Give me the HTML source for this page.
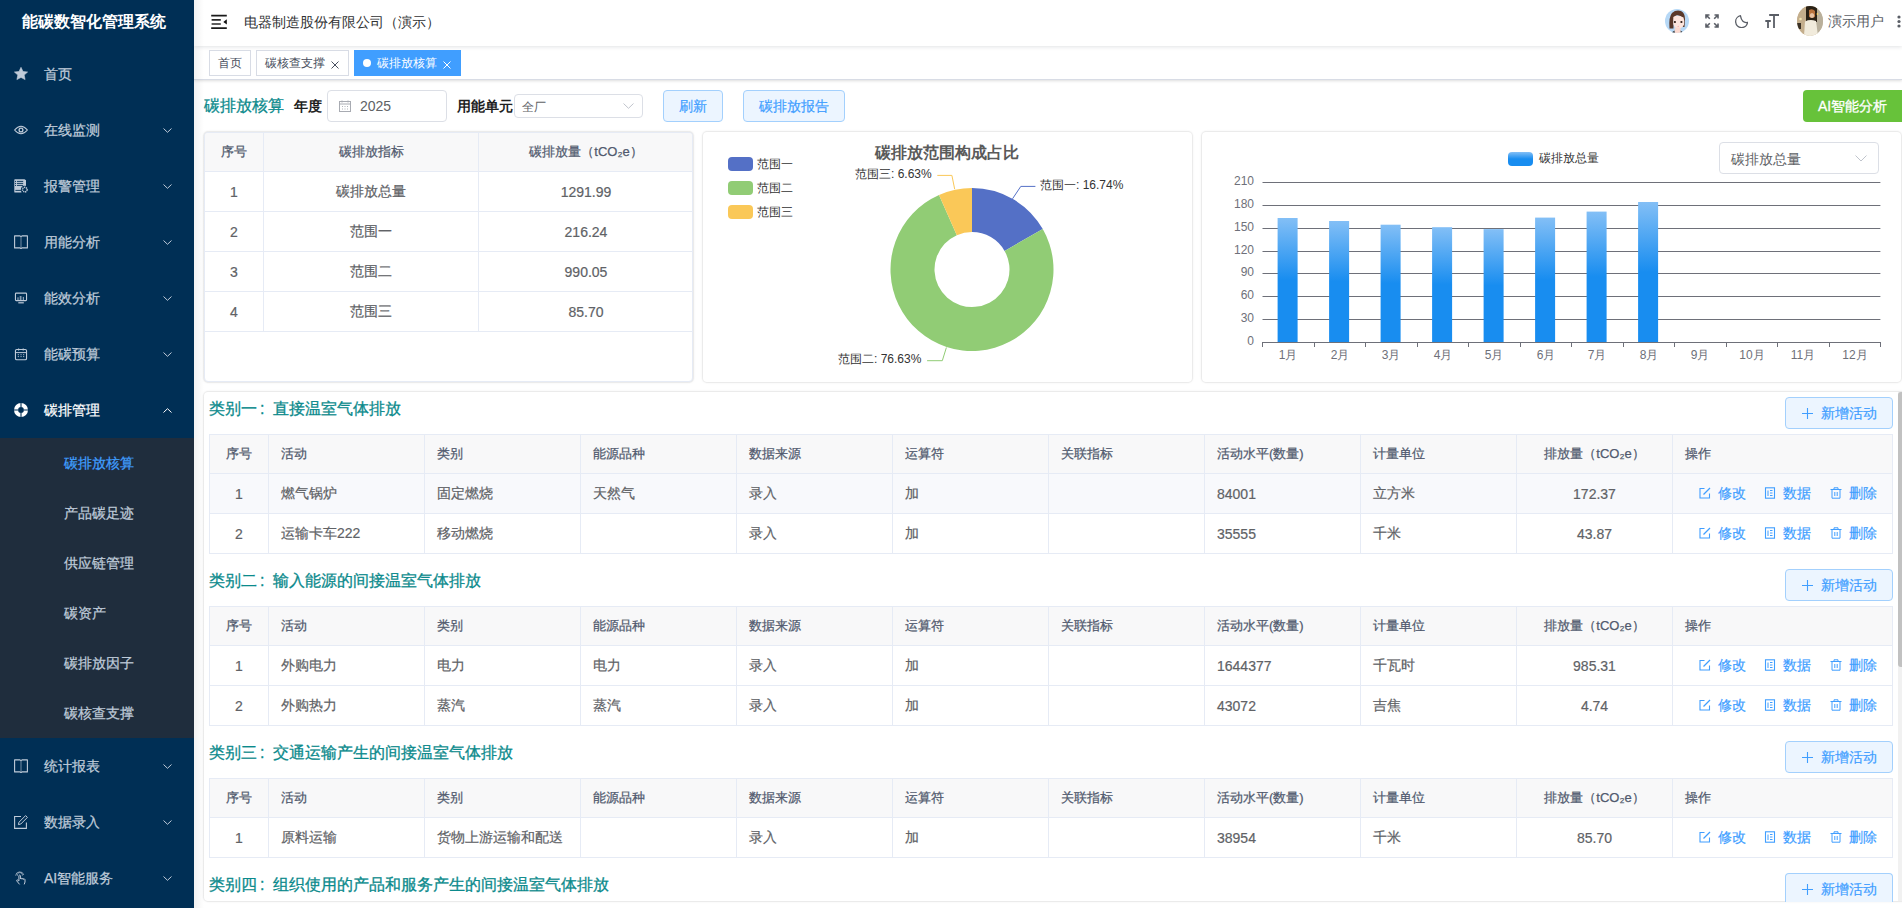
<!DOCTYPE html><html><head><meta charset="utf-8"><style>
*{box-sizing:border-box;margin:0;padding:0}
html,body{width:1902px;height:908px;overflow:hidden;background:#fff;font-family:"Liberation Sans",sans-serif;color:#606266;position:relative}
.a{position:absolute;white-space:nowrap}
#side{position:absolute;left:0;top:0;width:194px;height:908px;background:#002f55}
.logo{position:absolute;left:22px;top:0;height:46px;line-height:44px;color:#fff;font-weight:bold;font-size:16px;white-space:nowrap}
.mi{position:absolute;left:0;width:194px;height:56px;color:#bfcbd9;font-size:14px;-webkit-text-stroke:0.25px currentColor}
.mi svg.ic{position:absolute;left:14px;top:21px;width:14px;height:14px}
.mi .tx{position:absolute;left:44px;top:0;line-height:56px;white-space:nowrap}
.mi svg.ar{position:absolute;left:163px;top:26px;width:9px;height:5px}
#sub{position:absolute;left:0;top:438px;width:194px;height:300px;background:#1f2d3d}
.si{position:absolute;left:64px;height:50px;line-height:50px;color:#bfcbd9;font-size:14px;white-space:nowrap;-webkit-text-stroke:0.25px currentColor}
.tag{position:absolute;top:50px;height:26px;line-height:24px;border:1px solid #d8dce5;background:#fff;color:#495060;font-size:12px;padding:0 8px;white-space:nowrap}
.btnp{position:absolute;height:32px;line-height:30px;border:1px solid #a3d0fd;background:#ecf5ff;color:#409eff;font-size:14px;border-radius:4px;text-align:center;white-space:nowrap;-webkit-text-stroke:0.2px #409eff}
.card{position:absolute;background:#fff;border-radius:4px;box-shadow:0 0 1px 1px rgba(0,0,0,.05),0 0 3px rgba(0,0,0,.1)}
table.t{border-collapse:collapse;table-layout:fixed;position:absolute}
table.t td,table.t th{border:1px solid #e6ebf5;height:40px;font-size:14px;color:#606266;padding:0 12px;white-space:nowrap;overflow:hidden;-webkit-text-stroke:0.2px currentColor}
table.t th{background:#f8f8f9;color:#515a6e;font-size:13px;font-weight:normal;-webkit-text-stroke:0.25px #515a6e;height:39px}
.ttl{position:absolute;color:#0b8a8c;font-size:16px;white-space:nowrap;-webkit-text-stroke:0.3px #0b8a8c}
.op{color:#409eff}
</style></head><body>
<div id="side"><div class="logo">能碳数智化管理系统</div>
<div class="mi" style="top:46px;color:#bfcbd9"><svg class="ic" viewBox="0 0 14 14"><path d="M7 0.3 L9 4.5 L13.6 5 L10.2 8.1 L11.1 12.6 L7 10.4 L2.9 12.6 L3.8 8.1 L0.4 5 L5 4.5 Z" fill="#bfcbd9" stroke="#bfcbd9" stroke-width="0.6" stroke-linejoin="round"/></svg><div class="tx">首页</div></div>
<div class="mi" style="top:102px;color:#bfcbd9"><svg class="ic" viewBox="0 0 14 14"><path d="M0.6 7 Q7 -0.5 13.4 7 Q7 14.5 0.6 7 Z" fill="none" stroke="#bfcbd9" stroke-width="1.1"/><circle cx="7" cy="7" r="1.9" fill="none" stroke="#bfcbd9" stroke-width="1.3"/></svg><div class="tx">在线监测</div><svg class="ar" viewBox="0 0 9 5"><path d="M0.5 0.5 L4.5 4.3 L8.5 0.5" fill="none" stroke="#bfcbd9" stroke-width="1"/></svg></div>
<div class="mi" style="top:158px;color:#bfcbd9"><svg class="ic" viewBox="0 0 14 14"><path d="M0.3 0.8 Q0.3 0.2 1 0.2 H10.5 L12 1.2 V8 L9 9 L7.5 13.6 H1 Q0.3 13.6 0.3 13 Z" fill="#bfcbd9"/><path d="M3 2.4 H9.2 M3 4.4 H9.2 M3 6.4 H9.2 M1.4 11.4 H7.5" stroke="#002f55" stroke-width="0.9"/><circle cx="1.6" cy="2.4" r="0.55" fill="#002f55"/><circle cx="1.6" cy="4.4" r="0.55" fill="#002f55"/><circle cx="1.6" cy="6.4" r="0.55" fill="#002f55"/><circle cx="10.8" cy="10.6" r="3.9" fill="#002f55"/><circle cx="10.8" cy="10.6" r="2.3" fill="none" stroke="#bfcbd9" stroke-width="1.5" stroke-dasharray="1.2 0.6"/></svg><div class="tx">报警管理</div><svg class="ar" viewBox="0 0 9 5"><path d="M0.5 0.5 L4.5 4.3 L8.5 0.5" fill="none" stroke="#bfcbd9" stroke-width="1"/></svg></div>
<div class="mi" style="top:214px;color:#bfcbd9"><svg class="ic" viewBox="0 0 14 14"><path d="M0.6 0.9 H6 L7 1.6 L8 0.9 H13.4 V12.9 H8 L7 13.7 L6 12.9 H0.6 Z" fill="none" stroke="#bfcbd9" stroke-width="1.1" stroke-linejoin="round"/><path d="M7 1.8 V13" stroke="#bfcbd9" stroke-width="1" opacity="0.6"/></svg><div class="tx">用能分析</div><svg class="ar" viewBox="0 0 9 5"><path d="M0.5 0.5 L4.5 4.3 L8.5 0.5" fill="none" stroke="#bfcbd9" stroke-width="1"/></svg></div>
<div class="mi" style="top:270px;color:#bfcbd9"><svg class="ic" viewBox="0 0 14 14"><rect x="1.45" y="2.15" width="11.1" height="7.5" rx="0.8" fill="none" stroke="#bfcbd9" stroke-width="1.1"/><path d="M4 9.3 V6.3 M9.3 9.3 V5.9" stroke="#bfcbd9" stroke-width="0.9"/><path d="M6.6 9.3 V5" stroke="#bfcbd9" stroke-width="1.8" opacity="0.7"/><path d="M4.3 11.8 H9.8" stroke="#bfcbd9" stroke-width="1.2"/></svg><div class="tx">能效分析</div><svg class="ar" viewBox="0 0 9 5"><path d="M0.5 0.5 L4.5 4.3 L8.5 0.5" fill="none" stroke="#bfcbd9" stroke-width="1"/></svg></div>
<div class="mi" style="top:326px;color:#bfcbd9"><svg class="ic" viewBox="0 0 14 14"><rect x="1.45" y="2.55" width="11.1" height="10.2" rx="1.3" fill="none" stroke="#bfcbd9" stroke-width="1.1"/><path d="M1.5 5.6 H12.5" stroke="#bfcbd9" stroke-width="1"/><path d="M4.6 1.6 V3.4 M9.2 1.6 V3.4" stroke="#bfcbd9" stroke-width="1.1"/><path d="M3.8 7.7 H4.9 M6.5 7.7 H7.6 M9.1 7.7 H10.2 M3.8 9.6 H4.9 M6.5 9.6 H7.6 M9.1 9.6 H10.2" stroke="#bfcbd9" stroke-width="0.9"/></svg><div class="tx">能碳预算</div><svg class="ar" viewBox="0 0 9 5"><path d="M0.5 0.5 L4.5 4.3 L8.5 0.5" fill="none" stroke="#bfcbd9" stroke-width="1"/></svg></div>
<div class="mi" style="top:382px;color:#fff"><svg class="ic" viewBox="0 0 14 14"><circle cx="7" cy="7" r="4.95" fill="none" stroke="#fff" stroke-width="4.1"/><path d="M7 0 V4 M7 10 V14 M0 7 H4 M10 7 H14" stroke="#002f55" stroke-width="1.1"/></svg><div class="tx">碳排管理</div><svg class="ar" viewBox="0 0 9 5"><path d="M0.5 4.5 L4.5 0.7 L8.5 4.5" fill="none" stroke="#fff" stroke-width="1"/></svg></div>
<div class="mi" style="top:738px;color:#bfcbd9"><svg class="ic" viewBox="0 0 14 14"><path d="M0.6 0.9 H6 L7 1.6 L8 0.9 H13.4 V12.9 H8 L7 13.7 L6 12.9 H0.6 Z" fill="none" stroke="#bfcbd9" stroke-width="1.1" stroke-linejoin="round"/><path d="M7 1.8 V13" stroke="#bfcbd9" stroke-width="1" opacity="0.6"/></svg><div class="tx">统计报表</div><svg class="ar" viewBox="0 0 9 5"><path d="M0.5 0.5 L4.5 4.3 L8.5 0.5" fill="none" stroke="#bfcbd9" stroke-width="1"/></svg></div>
<div class="mi" style="top:794px;color:#bfcbd9"><svg class="ic" viewBox="0 0 14 14"><path d="M7 1.5 H0.6 V13.4 H12.4 V7.5" fill="none" stroke="#bfcbd9" stroke-width="1.1"/><path d="M4.4 9.6 L5 7.2 L11.6 0.6 L13.4 2.4 L6.8 9 Z" fill="none" stroke="#bfcbd9" stroke-width="1" stroke-linejoin="round"/></svg><div class="tx">数据录入</div><svg class="ar" viewBox="0 0 9 5"><path d="M0.5 0.5 L4.5 4.3 L8.5 0.5" fill="none" stroke="#bfcbd9" stroke-width="1"/></svg></div>
<div class="mi" style="top:850px;color:#bfcbd9"><svg class="ic" viewBox="0 0 14 14"><path d="M5.6 13.4 L2.8 10 Q2.3 9 3.4 8.9 L4.9 10 V4.6 Q5.6 3.6 6.4 4.6 V8 M6.4 7.6 Q7.2 7 8 7.6 V8.4 M8 7.8 Q8.8 7.2 9.6 7.8 V8.6 M9.6 8 Q10.6 7.6 11 8.6 V11 L10.2 13.4" fill="none" stroke="#bfcbd9" stroke-width="1"/><path d="M3.3 4.8 A2.6 2.6 0 1 1 8.4 4.6 M1.6 4.6 A4.2 4.2 0 0 1 9.8 3.9" fill="none" stroke="#bfcbd9" stroke-width="0.9" opacity="0.8"/></svg><div class="tx">AI智能服务</div><svg class="ar" viewBox="0 0 9 5"><path d="M0.5 0.5 L4.5 4.3 L8.5 0.5" fill="none" stroke="#bfcbd9" stroke-width="1"/></svg></div>
<div id="sub">
<div class="si" style="top:0px;color:#409eff">碳排放核算</div>
<div class="si" style="top:50px;color:#bfcbd9">产品碳足迹</div>
<div class="si" style="top:100px;color:#bfcbd9">供应链管理</div>
<div class="si" style="top:150px;color:#bfcbd9">碳资产</div>
<div class="si" style="top:200px;color:#bfcbd9">碳排放因子</div>
<div class="si" style="top:250px;color:#bfcbd9">碳核查支撑</div>
</div></div>
<div class="a" style="left:194px;top:46px;width:1708px;height:34px;background:#fff;border-bottom:1px solid #d8dce5;box-shadow:0 1px 3px 0 rgba(0,0,0,.12),0 0 3px 0 rgba(0,0,0,.04)"></div>
<div class="a" style="left:194px;top:0;width:1708px;height:46px;background:#fff;box-shadow:0 1px 4px rgba(0,21,41,.12)"></div>
<svg class="a" style="left:211px;top:14px" width="16" height="16" viewBox="0 0 16 16"><path d="M0.2 1.7 H15.8 M0.2 14.1 H15.8" stroke="#1a1a1a" stroke-width="1.7"/><path d="M0.6 5.9 H9.8 M0.6 10 H9.8" stroke="#2a2a2a" stroke-width="1.6"/><path d="M15.8 5.3 L12.3 8 L15.8 10.4 Z" fill="#111"/></svg>
<div class="a" style="left:244px;top:12px;font-size:14px;line-height:20px;color:#303133">电器制造股份有限公司（演示）</div>
<svg class="a" style="left:1665px;top:9px" width="24" height="24" viewBox="0 0 24 24"><defs><clipPath id="c1"><circle cx="12" cy="12" r="12"/></clipPath></defs><g clip-path="url(#c1)"><rect width="24" height="24" fill="#b6d8f6"/><path d="M4.5 19.5 Q3.5 8 7 4 Q11 0.5 16 2 Q20 4 20 10 L19.5 18 L17.5 18 L18 9 Q15 5.5 11 6.5 Q8.5 8 8.5 12 L8.5 19.5 Z" fill="#5a382a"/><path d="M8.3 8 Q12 5.5 18.5 8.5 Q19.8 12 19 15.5 Q17.5 19.5 13.5 19.5 Q9.5 19.5 8.3 15 Z" fill="#fde5dd"/><ellipse cx="9.9" cy="12.9" rx="1.1" ry="1" fill="#2a1a14"/><ellipse cx="16.4" cy="13.1" rx="1.1" ry="1" fill="#2a1a14"/><ellipse cx="13.2" cy="17.2" rx="0.9" ry="0.45" fill="#ee9b9b"/><path d="M9.8 18.5 H15.3 L16 24 H9.5 Z" fill="#fbd9cf"/><path d="M6 24 L9.5 21.5 L9.8 24 Z M15.5 21.5 L19 24 H15.8 Z" fill="#3a3a3a"/></g></svg>
<svg class="a" style="left:1705px;top:14px" width="14" height="14" viewBox="0 0 14 14"><g fill="none" stroke="#5a5e66" stroke-width="1.6"><path d="M1 4.5 V1 H4.5 M1 1 L4.8 4.8"/><path d="M9.5 1 H13 V4.5 M13 1 L9.2 4.8"/><path d="M1 9.5 V13 H4.5 M1 13 L4.8 9.2"/><path d="M13 9.5 V13 H9.5 M13 13 L9.2 9.2"/></g></svg>
<svg class="a" style="left:1735px;top:15px" width="13" height="13" viewBox="0 0 13 13"><path d="M5.4 0.7 A6 6 0 1 0 12.6 7.4 Q6.8 8.6 5.4 0.7 Z" fill="none" stroke="#5a5e66" stroke-width="1.3" stroke-linejoin="round"/></svg>
<svg class="a" style="left:1765px;top:14px" width="15" height="15" viewBox="0 0 15 15"><path d="M4.2 1 H14 M9 1 V14 M0.3 7 H5.8 M3 7 V14" fill="none" stroke="#5a5e66" stroke-width="1.8"/></svg>
<svg class="a" style="left:1797px;top:6px" width="26" height="30" viewBox="0 0 26 30"><defs><clipPath id="c2"><ellipse cx="13" cy="15" rx="13" ry="15"/></clipPath><filter id="bl"><feGaussianBlur stdDeviation="0.7"/></filter></defs><g clip-path="url(#c2)"><rect width="26" height="30" fill="#c9b596"/><g filter="url(#bl)"><rect x="0" y="0" width="9" height="30" fill="#c4ae8c"/><rect x="19" y="0" width="7" height="30" fill="#b9b09c"/><rect x="9" y="0" width="11" height="16" fill="#2a2018"/><path d="M12 4 Q15.5 2 18 5 L18 11 Q15 12.5 12 11 Z" fill="#b8733e"/><ellipse cx="15" cy="9.5" rx="2.2" ry="2.6" fill="#e6c3a4"/><path d="M7 30 L8 15.5 Q13 13 19 15 L21 30 Z" fill="#f1ebdc"/><circle cx="3.5" cy="13" r="1.3" fill="#f5e6b0"/><circle cx="20.5" cy="8" r="0.9" fill="#f2d36a"/><rect x="0" y="17" width="4" height="6" fill="#3a3028"/></g></g></svg>
<div class="a" style="left:1828px;top:11px;font-size:14px;line-height:20px;color:#5a5e66">演示用户</div>
<svg class="a" style="left:1896px;top:15px" width="6" height="13" viewBox="0 0 6 13"><circle cx="3" cy="2" r="1.6" fill="#5a5e66"/><circle cx="3" cy="6.5" r="1.6" fill="#5a5e66"/><circle cx="3" cy="11" r="1.6" fill="#5a5e66"/></svg>
<div class="tag" style="left:209px;width:42px">首页</div>
<div class="tag" style="left:256px;width:93px">碳核查支撑<svg style="position:absolute;left:74px;top:10px" width="8" height="8" viewBox="0 0 8 8"><path d="M0.5 0.5 L7.5 7.5 M7.5 0.5 L0.5 7.5" stroke="#495060" stroke-width="1"/></svg></div>
<div class="tag" style="left:354px;width:107px;background:#409eff;border-color:#409eff;color:#fff;padding-left:22px">碳排放核算<span style="position:absolute;left:8px;top:8px;width:8px;height:8px;border-radius:50%;background:#fff"></span><svg style="position:absolute;left:88px;top:10px" width="8" height="8" viewBox="0 0 8 8"><path d="M0.5 0.5 L7.5 7.5 M7.5 0.5 L0.5 7.5" stroke="#fff" stroke-width="1"/></svg></div>
<div class="ttl" style="left:204px;top:96px;line-height:20px">碳排放核算</div>
<div class="a" style="left:294px;top:96px;font-size:14px;line-height:20px;font-weight:bold;color:#1f1f1f">年度</div>
<div class="a" style="left:327px;top:90px;width:120px;height:32px;border:1px solid #dcdfe6;border-radius:4px;background:#fff"><svg style="position:absolute;left:11px;top:9px" width="12" height="12" viewBox="0 0 12 12"><rect x="0.5" y="1.5" width="11" height="10" fill="none" stroke="#a8abb2" stroke-width="1"/><path d="M0.5 4 H11.5 M3 0.5 V2.5 M9 0.5 V2.5" stroke="#a8abb2" stroke-width="1"/><path d="M3 6.5 H4 M5.5 6.5 H6.5 M8 6.5 H9 M3 9 H4 M5.5 9 H6.5 M8 9 H9" stroke="#a8abb2" stroke-width="0.9"/></svg><div class="a" style="left:32px;top:5px;font-size:14px;line-height:20px;color:#606266">2025</div></div>
<div class="a" style="left:457px;top:96px;font-size:14px;line-height:20px;font-weight:bold;color:#1f1f1f">用能单元</div>
<div class="a" style="left:514px;top:94px;width:129px;height:24px;border:1px solid #dcdfe6;border-radius:4px;background:#fff"><div class="a" style="left:7px;top:4px;font-size:12px;line-height:16px;color:#606266">全厂</div><svg style="position:absolute;left:108px;top:8px" width="11" height="6" viewBox="0 0 11 6"><path d="M0.5 0.5 L5.5 5.3 L10.5 0.5" fill="none" stroke="#c0c4cc" stroke-width="1"/></svg></div>
<div class="btnp" style="left:663px;top:90px;width:60px">刷新</div>
<div class="btnp" style="left:743px;top:90px;width:102px">碳排放报告</div>
<div class="a" style="left:1803px;top:90px;width:102px;height:32px;line-height:32px;background:#67c23a;color:#fff;font-size:14px;border-radius:4px;padding-left:15px;-webkit-text-stroke:0.3px #fff">AI智能分析</div>
<div class="card" style="left:204px;top:132px;width:489px;height:250px;overflow:hidden;border:1px solid #e6ebf5">
<table class="t" style="left:-1px;top:-1px;width:489px"><colgroup><col style="width:59px"><col style="width:215px"><col style="width:215px"></colgroup>
<tr><th style="text-align:center">序号</th><th style="text-align:center">碳排放指标</th><th style="text-align:center">碳排放量（tCO₂e）</th></tr>
<tr><td style="text-align:center">1</td><td style="text-align:center">碳排放总量</td><td style="text-align:center">1291.99</td></tr>
<tr><td style="text-align:center">2</td><td style="text-align:center">范围一</td><td style="text-align:center">216.24</td></tr>
<tr><td style="text-align:center">3</td><td style="text-align:center">范围二</td><td style="text-align:center">990.05</td></tr>
<tr><td style="text-align:center">4</td><td style="text-align:center">范围三</td><td style="text-align:center">85.70</td></tr>
</table></div>
<div class="card" style="left:703px;top:132px;width:489px;height:250px"></div>
<svg class="a" style="left:0;top:0" width="1902" height="908" viewBox="0 0 1902 908"><path d="M972.00 188.00 A81.5 81.5 0 0 1 1042.77 229.08 L1004.56 250.90 A37.5 37.5 0 0 0 972.00 232.00 Z" fill="#5470c6"/><path d="M1042.77 229.08 A81.5 81.5 0 1 1 939.02 194.97 L956.83 235.21 A37.5 37.5 0 1 0 1004.56 250.90 Z" fill="#91cc75"/><path d="M939.02 194.97 A81.5 81.5 0 0 1 972.00 188.00 L972.00 232.00 A37.5 37.5 0 0 0 956.83 235.21 Z" fill="#fac858"/><path d="M1012.5 198.8 L1020.8 186.4 L1035.4 186.4" fill="none" stroke="#5470c6" stroke-width="1"/><path d="M954.7 189.2 L951.9 175.4 L937.3 175.4" fill="none" stroke="#fac858" stroke-width="1"/><path d="M946.4 347.5 L942.3 360.7 L927.1 360.7" fill="none" stroke="#91cc75" stroke-width="1"/><rect x="728" y="157" width="25" height="14" rx="4" fill="#5470c6"/><rect x="728" y="181" width="25" height="14" rx="4" fill="#91cc75"/><rect x="728" y="205" width="25" height="14" rx="4" fill="#fac858"/></svg>
<div class="a" style="left:757px;top:156px;font-size:12px;line-height:16px;color:#333">范围一</div>
<div class="a" style="left:757px;top:180px;font-size:12px;line-height:16px;color:#333">范围二</div>
<div class="a" style="left:757px;top:204px;font-size:12px;line-height:16px;color:#333">范围三</div>
<div class="a" style="left:875px;top:143px;font-size:16px;line-height:20px;font-weight:bold;color:#5a5a5a">碳排放范围构成占比</div>
<div class="a" style="left:1040px;top:177px;font-size:12px;line-height:16px;color:#333">范围一: 16.74%</div>
<div class="a" style="left:855px;top:166px;font-size:12px;line-height:16px;color:#333">范围三: 6.63%</div>
<div class="a" style="left:838px;top:351px;font-size:12px;line-height:16px;color:#333">范围二: 76.63%</div>
<div class="card" style="left:1202px;top:132px;width:699px;height:250px"></div>
<svg class="a" style="left:0;top:0" width="1902" height="908" viewBox="0 0 1902 908"><defs><linearGradient id="bg" x1="0" y1="0" x2="0" y2="1"><stop offset="0" stop-color="#83bff6"/><stop offset="0.5" stop-color="#188df0"/><stop offset="1" stop-color="#188df0"/></linearGradient></defs><path d="M1262.5 182.5 H1880.4" stroke="#6e7079" stroke-width="1"/><path d="M1262.5 205.5 H1880.4" stroke="#6e7079" stroke-width="1"/><path d="M1262.5 228.5 H1880.4" stroke="#6e7079" stroke-width="1"/><path d="M1262.5 251.5 H1880.4" stroke="#6e7079" stroke-width="1"/><path d="M1262.5 273.5 H1880.4" stroke="#6e7079" stroke-width="1"/><path d="M1262.5 296.5 H1880.4" stroke="#6e7079" stroke-width="1"/><path d="M1262.5 319.5 H1880.4" stroke="#6e7079" stroke-width="1"/><path d="M1262.5 342.5 H1880.4" stroke="#6e7079" stroke-width="1"/><path d="M1262.5 342 V347" stroke="#6e7079" stroke-width="1"/><path d="M1314.5 342 V347" stroke="#6e7079" stroke-width="1"/><path d="M1365.5 342 V347" stroke="#6e7079" stroke-width="1"/><path d="M1417.5 342 V347" stroke="#6e7079" stroke-width="1"/><path d="M1468.5 342 V347" stroke="#6e7079" stroke-width="1"/><path d="M1520.5 342 V347" stroke="#6e7079" stroke-width="1"/><path d="M1571.5 342 V347" stroke="#6e7079" stroke-width="1"/><path d="M1623.5 342 V347" stroke="#6e7079" stroke-width="1"/><path d="M1674.5 342 V347" stroke="#6e7079" stroke-width="1"/><path d="M1726.5 342 V347" stroke="#6e7079" stroke-width="1"/><path d="M1777.5 342 V347" stroke="#6e7079" stroke-width="1"/><path d="M1829.5 342 V347" stroke="#6e7079" stroke-width="1"/><path d="M1880.5 342 V347" stroke="#6e7079" stroke-width="1"/><rect x="1277.6" y="218.0" width="20" height="124.0" fill="url(#bg)"/><rect x="1329.1" y="221.0" width="20" height="121.0" fill="url(#bg)"/><rect x="1380.6" y="224.7" width="20" height="117.3" fill="url(#bg)"/><rect x="1432.1" y="227.2" width="20" height="114.8" fill="url(#bg)"/><rect x="1483.6" y="229.1" width="20" height="112.9" fill="url(#bg)"/><rect x="1535.1" y="217.6" width="20" height="124.4" fill="url(#bg)"/><rect x="1586.6" y="211.6" width="20" height="130.4" fill="url(#bg)"/><rect x="1638.1" y="202.0" width="20" height="140.0" fill="url(#bg)"/><rect x="1508" y="152" width="25" height="14" rx="4" fill="url(#bg)"/></svg>
<div class="a" style="left:1204px;width:50px;text-align:right;top:174px;font-size:12px;line-height:14px;color:#6e7079">210</div>
<div class="a" style="left:1204px;width:50px;text-align:right;top:197px;font-size:12px;line-height:14px;color:#6e7079">180</div>
<div class="a" style="left:1204px;width:50px;text-align:right;top:220px;font-size:12px;line-height:14px;color:#6e7079">150</div>
<div class="a" style="left:1204px;width:50px;text-align:right;top:243px;font-size:12px;line-height:14px;color:#6e7079">120</div>
<div class="a" style="left:1204px;width:50px;text-align:right;top:265px;font-size:12px;line-height:14px;color:#6e7079">90</div>
<div class="a" style="left:1204px;width:50px;text-align:right;top:288px;font-size:12px;line-height:14px;color:#6e7079">60</div>
<div class="a" style="left:1204px;width:50px;text-align:right;top:311px;font-size:12px;line-height:14px;color:#6e7079">30</div>
<div class="a" style="left:1204px;width:50px;text-align:right;top:334px;font-size:12px;line-height:14px;color:#6e7079">0</div>
<div class="a" style="left:1263px;width:50px;text-align:center;top:347px;font-size:12px;line-height:16px;color:#6e7079">1月</div>
<div class="a" style="left:1315px;width:50px;text-align:center;top:347px;font-size:12px;line-height:16px;color:#6e7079">2月</div>
<div class="a" style="left:1366px;width:50px;text-align:center;top:347px;font-size:12px;line-height:16px;color:#6e7079">3月</div>
<div class="a" style="left:1418px;width:50px;text-align:center;top:347px;font-size:12px;line-height:16px;color:#6e7079">4月</div>
<div class="a" style="left:1469px;width:50px;text-align:center;top:347px;font-size:12px;line-height:16px;color:#6e7079">5月</div>
<div class="a" style="left:1521px;width:50px;text-align:center;top:347px;font-size:12px;line-height:16px;color:#6e7079">6月</div>
<div class="a" style="left:1572px;width:50px;text-align:center;top:347px;font-size:12px;line-height:16px;color:#6e7079">7月</div>
<div class="a" style="left:1624px;width:50px;text-align:center;top:347px;font-size:12px;line-height:16px;color:#6e7079">8月</div>
<div class="a" style="left:1675px;width:50px;text-align:center;top:347px;font-size:12px;line-height:16px;color:#6e7079">9月</div>
<div class="a" style="left:1727px;width:50px;text-align:center;top:347px;font-size:12px;line-height:16px;color:#6e7079">10月</div>
<div class="a" style="left:1778px;width:50px;text-align:center;top:347px;font-size:12px;line-height:16px;color:#6e7079">11月</div>
<div class="a" style="left:1830px;width:50px;text-align:center;top:347px;font-size:12px;line-height:16px;color:#6e7079">12月</div>
<div class="a" style="left:1539px;top:150px;font-size:12px;line-height:16px;color:#333">碳排放总量</div>
<div class="a" style="left:1719px;top:142px;width:160px;height:32px;border:1px solid #dcdfe6;border-radius:4px;background:#fff"><div class="a" style="left:11px;top:6px;font-size:14px;line-height:20px;color:#606266">碳排放总量</div><svg style="position:absolute;left:135px;top:12px" width="12" height="7" viewBox="0 0 12 7"><path d="M0.5 0.5 L6 6 L11.5 0.5" fill="none" stroke="#c0c4cc" stroke-width="1"/></svg></div>
<div class="card" style="left:204px;top:392px;width:1720px;height:509px;overflow:hidden">
</div>
<div class="ttl" style="left:209px;top:398px;line-height:22px">类别一<span style="display:inline-block;width:16px;padding-left:3px">:</span>直接温室气体排放</div>
<div class="btnp" style="left:1785px;top:397px;width:108px;"><svg width="11" height="11" viewBox="0 0 11 11" style="vertical-align:-1px;margin-right:8px"><path d="M5.5 0 V11 M0 5.5 H11" stroke="#409eff" stroke-width="1.1"/></svg>新增活动</div>
<table class="t" style="left:209px;top:434px;width:1684px"><colgroup><col style="width:59px"><col style="width:156px"><col style="width:156px"><col style="width:156px"><col style="width:156px"><col style="width:156px"><col style="width:156px"><col style="width:156px"><col style="width:156px"><col style="width:156px"><col style="width:220px"></colgroup>
<tr><th style="text-align:center">序号</th><th style="text-align:left">活动</th><th style="text-align:left">类别</th><th style="text-align:left">能源品种</th><th style="text-align:left">数据来源</th><th style="text-align:left">运算符</th><th style="text-align:left">关联指标</th><th style="text-align:left">活动水平(数量)</th><th style="text-align:left">计量单位</th><th style="text-align:center">排放量（tCO₂e）</th><th style="text-align:left">操作</th></tr>
<tr><td style="background:#f8f9fc;text-align:center">1</td><td style="background:#f8f9fc;text-align:left">燃气锅炉</td><td style="background:#f8f9fc;text-align:left">固定燃烧</td><td style="background:#f8f9fc;text-align:left">天然气</td><td style="background:#f8f9fc;text-align:left">录入</td><td style="background:#f8f9fc;text-align:left">加</td><td style="background:#f8f9fc;text-align:left"></td><td style="background:#f8f9fc;text-align:left">84001</td><td style="background:#f8f9fc;text-align:left">立方米</td><td style="background:#f8f9fc;text-align:center">172.37</td><td style="background:#f8f9fc;position:relative"><span class="a op" style="left:26px;top:9px;line-height:20px"><svg width="12" height="12" viewBox="0 0 12 12" style="vertical-align:-1px"><path d="M5.5 1.5 H1 V11 H10.5 V6.5" fill="none" stroke="#409eff" stroke-width="1.1"/><path d="M4.5 7.5 L11 1" stroke="#409eff" stroke-width="1.2"/></svg><span style="margin-left:7px">修改</span></span><span class="a op" style="left:91px;top:9px;line-height:20px"><svg width="12" height="12" viewBox="0 0 12 12" style="vertical-align:-1px"><rect x="1.5" y="0.8" width="9" height="10.4" fill="none" stroke="#409eff" stroke-width="1.1"/><path d="M4 3.5 V9 M6 3.5 H8.5 M6 6 H8.5 M6 8.5 H8.5" stroke="#409eff" stroke-width="1"/></svg><span style="margin-left:7px">数据</span></span><span class="a op" style="left:157px;top:9px;line-height:20px"><svg width="12" height="12" viewBox="0 0 12 12" style="vertical-align:-1px"><path d="M0.5 2.5 H11.5 M4 2.5 V0.8 H8 V2.5 M2 2.5 V11.2 H10 V2.5 M4.8 5 V9 M7.2 5 V9" fill="none" stroke="#409eff" stroke-width="1"/></svg><span style="margin-left:7px">删除</span></span></td></tr>
<tr><td style="text-align:center">2</td><td style="text-align:left">运输卡车222</td><td style="text-align:left">移动燃烧</td><td style="text-align:left"></td><td style="text-align:left">录入</td><td style="text-align:left">加</td><td style="text-align:left"></td><td style="text-align:left">35555</td><td style="text-align:left">千米</td><td style="text-align:center">43.87</td><td style="position:relative"><span class="a op" style="left:26px;top:9px;line-height:20px"><svg width="12" height="12" viewBox="0 0 12 12" style="vertical-align:-1px"><path d="M5.5 1.5 H1 V11 H10.5 V6.5" fill="none" stroke="#409eff" stroke-width="1.1"/><path d="M4.5 7.5 L11 1" stroke="#409eff" stroke-width="1.2"/></svg><span style="margin-left:7px">修改</span></span><span class="a op" style="left:91px;top:9px;line-height:20px"><svg width="12" height="12" viewBox="0 0 12 12" style="vertical-align:-1px"><rect x="1.5" y="0.8" width="9" height="10.4" fill="none" stroke="#409eff" stroke-width="1.1"/><path d="M4 3.5 V9 M6 3.5 H8.5 M6 6 H8.5 M6 8.5 H8.5" stroke="#409eff" stroke-width="1"/></svg><span style="margin-left:7px">数据</span></span><span class="a op" style="left:157px;top:9px;line-height:20px"><svg width="12" height="12" viewBox="0 0 12 12" style="vertical-align:-1px"><path d="M0.5 2.5 H11.5 M4 2.5 V0.8 H8 V2.5 M2 2.5 V11.2 H10 V2.5 M4.8 5 V9 M7.2 5 V9" fill="none" stroke="#409eff" stroke-width="1"/></svg><span style="margin-left:7px">删除</span></span></td></tr>
</table>
<div class="ttl" style="left:209px;top:570px;line-height:22px">类别二<span style="display:inline-block;width:16px;padding-left:3px">:</span>输入能源的间接温室气体排放</div>
<div class="btnp" style="left:1785px;top:569px;width:108px;"><svg width="11" height="11" viewBox="0 0 11 11" style="vertical-align:-1px;margin-right:8px"><path d="M5.5 0 V11 M0 5.5 H11" stroke="#409eff" stroke-width="1.1"/></svg>新增活动</div>
<table class="t" style="left:209px;top:606px;width:1684px"><colgroup><col style="width:59px"><col style="width:156px"><col style="width:156px"><col style="width:156px"><col style="width:156px"><col style="width:156px"><col style="width:156px"><col style="width:156px"><col style="width:156px"><col style="width:156px"><col style="width:220px"></colgroup>
<tr><th style="text-align:center">序号</th><th style="text-align:left">活动</th><th style="text-align:left">类别</th><th style="text-align:left">能源品种</th><th style="text-align:left">数据来源</th><th style="text-align:left">运算符</th><th style="text-align:left">关联指标</th><th style="text-align:left">活动水平(数量)</th><th style="text-align:left">计量单位</th><th style="text-align:center">排放量（tCO₂e）</th><th style="text-align:left">操作</th></tr>
<tr><td style="text-align:center">1</td><td style="text-align:left">外购电力</td><td style="text-align:left">电力</td><td style="text-align:left">电力</td><td style="text-align:left">录入</td><td style="text-align:left">加</td><td style="text-align:left"></td><td style="text-align:left">1644377</td><td style="text-align:left">千瓦时</td><td style="text-align:center">985.31</td><td style="position:relative"><span class="a op" style="left:26px;top:9px;line-height:20px"><svg width="12" height="12" viewBox="0 0 12 12" style="vertical-align:-1px"><path d="M5.5 1.5 H1 V11 H10.5 V6.5" fill="none" stroke="#409eff" stroke-width="1.1"/><path d="M4.5 7.5 L11 1" stroke="#409eff" stroke-width="1.2"/></svg><span style="margin-left:7px">修改</span></span><span class="a op" style="left:91px;top:9px;line-height:20px"><svg width="12" height="12" viewBox="0 0 12 12" style="vertical-align:-1px"><rect x="1.5" y="0.8" width="9" height="10.4" fill="none" stroke="#409eff" stroke-width="1.1"/><path d="M4 3.5 V9 M6 3.5 H8.5 M6 6 H8.5 M6 8.5 H8.5" stroke="#409eff" stroke-width="1"/></svg><span style="margin-left:7px">数据</span></span><span class="a op" style="left:157px;top:9px;line-height:20px"><svg width="12" height="12" viewBox="0 0 12 12" style="vertical-align:-1px"><path d="M0.5 2.5 H11.5 M4 2.5 V0.8 H8 V2.5 M2 2.5 V11.2 H10 V2.5 M4.8 5 V9 M7.2 5 V9" fill="none" stroke="#409eff" stroke-width="1"/></svg><span style="margin-left:7px">删除</span></span></td></tr>
<tr><td style="text-align:center">2</td><td style="text-align:left">外购热力</td><td style="text-align:left">蒸汽</td><td style="text-align:left">蒸汽</td><td style="text-align:left">录入</td><td style="text-align:left">加</td><td style="text-align:left"></td><td style="text-align:left">43072</td><td style="text-align:left">吉焦</td><td style="text-align:center">4.74</td><td style="position:relative"><span class="a op" style="left:26px;top:9px;line-height:20px"><svg width="12" height="12" viewBox="0 0 12 12" style="vertical-align:-1px"><path d="M5.5 1.5 H1 V11 H10.5 V6.5" fill="none" stroke="#409eff" stroke-width="1.1"/><path d="M4.5 7.5 L11 1" stroke="#409eff" stroke-width="1.2"/></svg><span style="margin-left:7px">修改</span></span><span class="a op" style="left:91px;top:9px;line-height:20px"><svg width="12" height="12" viewBox="0 0 12 12" style="vertical-align:-1px"><rect x="1.5" y="0.8" width="9" height="10.4" fill="none" stroke="#409eff" stroke-width="1.1"/><path d="M4 3.5 V9 M6 3.5 H8.5 M6 6 H8.5 M6 8.5 H8.5" stroke="#409eff" stroke-width="1"/></svg><span style="margin-left:7px">数据</span></span><span class="a op" style="left:157px;top:9px;line-height:20px"><svg width="12" height="12" viewBox="0 0 12 12" style="vertical-align:-1px"><path d="M0.5 2.5 H11.5 M4 2.5 V0.8 H8 V2.5 M2 2.5 V11.2 H10 V2.5 M4.8 5 V9 M7.2 5 V9" fill="none" stroke="#409eff" stroke-width="1"/></svg><span style="margin-left:7px">删除</span></span></td></tr>
</table>
<div class="ttl" style="left:209px;top:742px;line-height:22px">类别三<span style="display:inline-block;width:16px;padding-left:3px">:</span>交通运输产生的间接温室气体排放</div>
<div class="btnp" style="left:1785px;top:741px;width:108px;"><svg width="11" height="11" viewBox="0 0 11 11" style="vertical-align:-1px;margin-right:8px"><path d="M5.5 0 V11 M0 5.5 H11" stroke="#409eff" stroke-width="1.1"/></svg>新增活动</div>
<table class="t" style="left:209px;top:778px;width:1684px"><colgroup><col style="width:59px"><col style="width:156px"><col style="width:156px"><col style="width:156px"><col style="width:156px"><col style="width:156px"><col style="width:156px"><col style="width:156px"><col style="width:156px"><col style="width:156px"><col style="width:220px"></colgroup>
<tr><th style="text-align:center">序号</th><th style="text-align:left">活动</th><th style="text-align:left">类别</th><th style="text-align:left">能源品种</th><th style="text-align:left">数据来源</th><th style="text-align:left">运算符</th><th style="text-align:left">关联指标</th><th style="text-align:left">活动水平(数量)</th><th style="text-align:left">计量单位</th><th style="text-align:center">排放量（tCO₂e）</th><th style="text-align:left">操作</th></tr>
<tr><td style="text-align:center">1</td><td style="text-align:left">原料运输</td><td style="text-align:left">货物上游运输和配送</td><td style="text-align:left"></td><td style="text-align:left">录入</td><td style="text-align:left">加</td><td style="text-align:left"></td><td style="text-align:left">38954</td><td style="text-align:left">千米</td><td style="text-align:center">85.70</td><td style="position:relative"><span class="a op" style="left:26px;top:9px;line-height:20px"><svg width="12" height="12" viewBox="0 0 12 12" style="vertical-align:-1px"><path d="M5.5 1.5 H1 V11 H10.5 V6.5" fill="none" stroke="#409eff" stroke-width="1.1"/><path d="M4.5 7.5 L11 1" stroke="#409eff" stroke-width="1.2"/></svg><span style="margin-left:7px">修改</span></span><span class="a op" style="left:91px;top:9px;line-height:20px"><svg width="12" height="12" viewBox="0 0 12 12" style="vertical-align:-1px"><rect x="1.5" y="0.8" width="9" height="10.4" fill="none" stroke="#409eff" stroke-width="1.1"/><path d="M4 3.5 V9 M6 3.5 H8.5 M6 6 H8.5 M6 8.5 H8.5" stroke="#409eff" stroke-width="1"/></svg><span style="margin-left:7px">数据</span></span><span class="a op" style="left:157px;top:9px;line-height:20px"><svg width="12" height="12" viewBox="0 0 12 12" style="vertical-align:-1px"><path d="M0.5 2.5 H11.5 M4 2.5 V0.8 H8 V2.5 M2 2.5 V11.2 H10 V2.5 M4.8 5 V9 M7.2 5 V9" fill="none" stroke="#409eff" stroke-width="1"/></svg><span style="margin-left:7px">删除</span></span></td></tr>
</table>
<div class="ttl" style="left:209px;top:874px;line-height:22px">类别四<span style="display:inline-block;width:16px;padding-left:3px">:</span>组织使用的产品和服务产生的间接温室气体排放</div>
<div class="btnp" style="left:1785px;top:873px;width:108px;height:29px;border-bottom:none;border-radius:4px 4px 0 0;"><svg width="11" height="11" viewBox="0 0 11 11" style="vertical-align:-1px;margin-right:8px"><path d="M5.5 0 V11 M0 5.5 H11" stroke="#409eff" stroke-width="1.1"/></svg>新增活动</div>
<div class="a" style="left:1898px;top:392px;width:6px;height:509px;background:#f1f1f1"></div>
<div class="a" style="left:1898px;top:392px;width:6px;height:275px;background:#c1c1c1;border-radius:3px"></div>
<div class="a" style="left:194px;top:0;width:10px;height:908px;background:linear-gradient(to right,rgba(0,0,0,.05),rgba(0,0,0,0))"></div>
</body></html>
